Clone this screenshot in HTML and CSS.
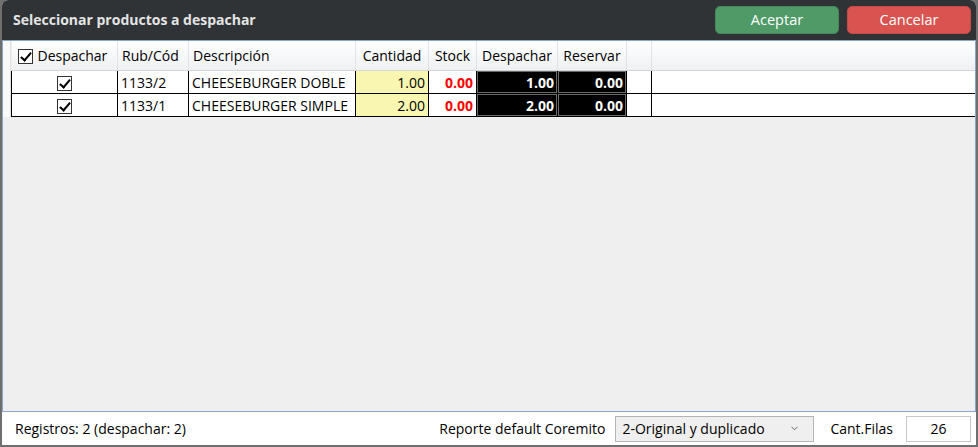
FILE: index.html
```html
<!DOCTYPE html>
<html lang="es">
<head>
    <meta charset="UTF-8">
    <title>Seleccionar productos a despachar</title>
    <link rel="stylesheet" href="styles.css">
</head>
<body>
    <div class="window">
        <div class="titlebar">
            <span class="title">Seleccionar productos a despachar</span>
            <div class="actions">
                <button type="button" class="btn btn-ok">Aceptar</button>
                <button type="button" class="btn btn-cancel">Cancelar</button>
            </div>
        </div>

        <div class="grid-panel">
            <div class="row-header"></div>
            <table class="grid">
                <colgroup>
                    <col class="c-check">
                    <col class="c-code">
                    <col class="c-desc">
                    <col class="c-qty">
                    <col class="c-stock">
                    <col class="c-disp">
                    <col class="c-res">
                    <col class="c-blank">
                    <col>
                </colgroup>
                <thead>
                    <tr>
                        <th class="left"><span class="check"></span>Despachar</th>
                        <th class="left">Rub/Cód</th>
                        <th class="left">Descripción</th>
                        <th>Cantidad</th>
                        <th>Stock</th>
                        <th>Despachar</th>
                        <th>Reservar</th>
                        <th></th>
                        <th class="filler"></th>
                    </tr>
                </thead>
                <tbody>
                    <tr>
                        <td class="center"><span class="check"></span></td>
                        <td>1133/2</td>
                        <td>CHEESEBURGER DOBLE</td>
                        <td class="qty">1.00</td>
                        <td class="stock">0.00</td>
                        <td class="dark">1.00</td>
                        <td class="dark">0.00</td>
                        <td></td>
                        <td></td>
                    </tr>
                    <tr>
                        <td class="center"><span class="check"></span></td>
                        <td>1133/1</td>
                        <td>CHEESEBURGER SIMPLE</td>
                        <td class="qty">2.00</td>
                        <td class="stock">0.00</td>
                        <td class="dark">2.00</td>
                        <td class="dark">0.00</td>
                        <td></td>
                        <td></td>
                    </tr>
                </tbody>
            </table>
        </div>

        <div class="footer">
            <span class="count">Registros: 2 (despachar: 2)</span>
            <label class="field">Reporte default Coremito</label>
            <div class="select">
                <span>2-Original y duplicado</span>
                <svg class="chevron" width="7" height="5" viewBox="0 0 7 5">
                    <path d="M0.5 0.8 L3.5 3.8 L6.5 0.8" fill="none" stroke="#666" stroke-width="1"/>
                </svg>
            </div>
            <label class="field field-rows">Cant.Filas</label>
            <div class="num">26</div>
        </div>
    </div>
</body>
</html>
```

FILE: styles.css
```css
body {
    margin: 0;
    background-color: #6f6f6f;
    font-family: "Open Sans", "Noto Sans", sans-serif;
    font-size: 14px;
    color: #000;
}

.window {
    width: 974px;
    height: 445px;
    margin: 0 2px;
    display: flex;
    flex-direction: column;
    background-color: #ffffff;
    border-radius: 6px 6px 0 0;
    overflow: hidden;
}

.titlebar {
    height: 40px;
    flex-shrink: 0;
    display: flex;
    align-items: center;
    justify-content: space-between;
    background-color: #303336;
    padding: 0 5px 0 11px;
}

.title {
    color: #e4e4e4;
    font-weight: bold;
    font-size: 14px;
    margin-top: -1px;
}

.actions {
    display: flex;
    gap: 8px;
    margin-top: -1px;
}

.btn {
    width: 124px;
    height: 28px;
    border-radius: 5px;
    font-family: inherit;
    font-size: 14.5px;
    color: #ffffff;
    cursor: pointer;
}

.btn-ok {
    background-color: #4f9a67;
    border: 1px solid #458a5b;
}

.btn-cancel {
    background-color: #d95451;
    border: 1px solid #c64a47;
}

.grid-panel {
    flex: 1;
    display: flex;
    align-items: flex-start;
    background-color: #efefef;
    border: 1px solid #8aa6c8;
}

.row-header {
    width: 7px;
    height: 76px;
    background-color: #fafafa;
    border-right: 1px solid #e2e2e2;
}

.grid {
    flex: 1;
    border-collapse: collapse;
    table-layout: fixed;
}

.c-check { width: 106px; }
.c-code { width: 71px; }
.c-desc { width: 167px; }
.c-qty { width: 73px; }
.c-stock { width: 48px; }
.c-disp { width: 81px; }
.c-res { width: 69px; }
.c-blank { width: 25px; }

.grid th {
    height: 29px;
    padding: 0 4px;
    font-weight: normal;
    text-align: center;
    white-space: nowrap;
    overflow: hidden;
    background: linear-gradient(#ffffff, #eef0f3);
    border-right: 1px solid #dfe3e8;
    border-bottom: 1px solid #d5d5d5;
}

.grid th.left {
    text-align: left;
}

.grid th.filler {
    border-right: none;
}

.grid td {
    height: 22px;
    padding: 0 3px;
    white-space: nowrap;
    overflow: hidden;
    border: 1px solid #000;
    background-color: #ffffff;
}

.grid td:last-child {
    border-right: none;
}

.grid td.center {
    text-align: center;
}

.grid td.qty {
    background-color: #f8f6b1;
    text-align: right;
}

.grid td.stock {
    color: #ff0000;
    font-weight: bold;
    text-align: right;
}

.grid td.dark {
    background-color: #000;
    color: #ffffff;
    font-weight: bold;
    text-align: right;
    box-shadow: inset 0 0 0 1px #6a6a6a;
}

.check {
    display: inline-block;
    width: 13px;
    height: 13px;
    border: 1px solid #333;
    background-color: #fff;
    vertical-align: -3px;
    position: relative;
}

th .check {
    margin-right: 5px;
    margin-left: 2px;
}

.check::after {
    content: "";
    position: absolute;
    left: 4px;
    top: 0px;
    width: 4px;
    height: 9px;
    border: solid #000;
    border-width: 0 2px 2px 0;
    transform: rotate(40deg);
}

.footer {
    height: 33px;
    flex-shrink: 0;
    display: flex;
    align-items: center;
    padding: 0 5px 0 13px;
    background-color: #ffffff;
}

.count {
    flex: 1;
}

.field {
    margin-right: 10px;
}

.field-rows {
    margin-right: 13px;
}

.select {
    box-sizing: border-box;
    width: 199px;
    height: 26px;
    display: flex;
    align-items: center;
    justify-content: space-between;
    padding: 0 6px;
    margin-right: 16px;
    background-color: #efefef;
    border: 1px solid #b4b4b4;
}

.chevron {
    margin-right: 9px;
}

.num {
    box-sizing: border-box;
    width: 65px;
    height: 26px;
    line-height: 24px;
    text-align: center;
    border: 1px solid #c8c8c8;
}
```
